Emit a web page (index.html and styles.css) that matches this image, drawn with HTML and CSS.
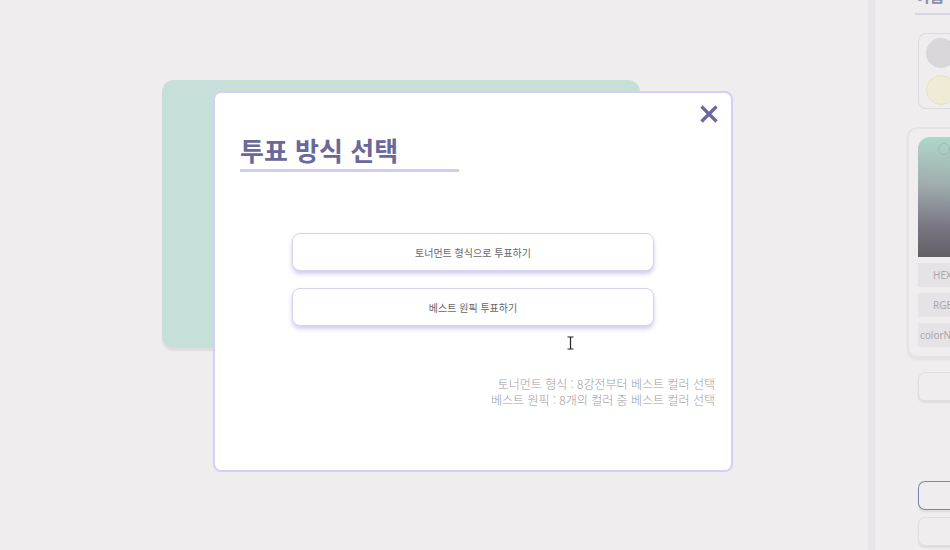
FILE: index.html
```html
<!DOCTYPE html>
<html lang="ko">
<head>
<meta charset="utf-8">
<link rel="stylesheet" href="styles.css">
</head>
<body>
<div class="main">
  <div class="back-card"></div>
  <div class="modal">
    <button class="close" aria-label="닫기">
      <svg width="20" height="20" viewBox="0 0 20 20"><path d="M2.5 2.5 L17.5 17.5 M17.5 2.5 L2.5 17.5" stroke="#6a6899" stroke-width="3.2" stroke-linecap="butt" fill="none"/></svg>
    </button>
    <h2 class="title">투표 방식 선택</h2>
    <div class="title-line"></div>
    <div class="options">
      <button class="option">토너먼트 형식으로 투표하기</button>
      <button class="option">베스트 원픽 투표하기</button>
    </div>
    <div class="info">
      <p>토너먼트 형식 : 8강전부터 베스트 컬러 선택</p>
      <p>베스트 원픽 : 8개의 컬러 중 베스트 컬러 선택</p>
    </div>
    <svg class="cursor" width="7" height="14" viewBox="0 0 7 14"><path d="M0.5 1 H6.5 M3.5 1 V13 M0.5 13 H6.5" stroke="#222" stroke-width="1.2" fill="none"/></svg>
  </div>
</div>
<aside class="side">
  <div class="stripe"></div>
  <div class="panel">
    <div class="panel-head">이름</div>
    <div class="swatches">
      <span class="dot gray"></span>
      <span class="dot cream"></span>
    </div>
    <div class="picker">
      <div class="gradient"><span class="ring"></span></div>
      <div class="field">HEX</div>
      <div class="field">RGBA</div>
      <div class="field small">colorName</div>
    </div>
    <div class="pbtn"></div>
    <div class="spacer"></div>
    <div class="pbtn active"></div>
    <div class="pbtn"></div>
  </div>
</aside>
</body>
</html>
```
FILE: styles.css
```css
* { box-sizing: border-box; }
html, body { margin: 0; padding: 0; }
body {
  width: 950px;
  height: 550px;
  overflow: hidden;
  background: #efedee;
  display: flex;
  font-family: "Noto Sans CJK KR", "Noto Sans", sans-serif;
}
.main {
  position: relative;
  width: 868px;
  flex: none;
}
.back-card {
  margin: 80px 0 0 162px;
  width: 478px;
  height: 268px;
  background: #c6e0d9;
  border-radius: 12px;
  box-shadow: 0 3px 2px rgba(0, 0, 0, 0.07);
}
.modal {
  position: absolute;
  left: 213px;
  top: 91px;
  width: 520px;
  height: 381px;
  background: #fff;
  border: 2px solid #d3d0f3;
  border-radius: 8px;
  padding: 0 16px 0 25px;
}
.close {
  position: absolute;
  right: 12px;
  top: 11px;
  padding: 0;
  border: 0;
  background: none;
  width: 20px;
  height: 20px;
}
.close svg { display: block; }
.title {
  margin: 38px 0 0 0;
  font-size: 26px;
  font-weight: 700;
  line-height: 38px;
  color: #6a6899;
  letter-spacing: 0;
}
.title-line {
  width: 219px;
  height: 3px;
  background: #d0cdf3;
  margin-top: 0;
}
.options {
  display: flex;
  flex-direction: column;
  align-items: center;
  gap: 17px;
  margin-top: 61px;
  margin-left: -25px;
  margin-right: -16px;
}
.option {
  width: 362px;
  height: 38px;
  background: #fff;
  border: 1.5px solid #d6d3ef;
  border-radius: 8px;
  box-shadow: 0 3px 4px rgba(170, 165, 225, 0.55);
  font-family: "Noto Sans CJK KR", "Noto Sans", sans-serif;
  font-size: 10px;
  font-weight: 400;
  color: #66666d;
  padding: 0;
}
.info {
  margin-top: 50px;
  text-align: right;
  font-size: 12px;
  line-height: 16px;
  font-weight: 300;
  color: #9d9ca2;
}
.info p { margin: 0; }
.cursor {
  position: absolute;
  left: 352px;
  top: 243px;
}
.side {
  flex: 1;
  display: flex;
}
.stripe {
  width: 7px;
  background: #e8e6e8;
}
.panel {
  flex: 1;
  padding-left: 40px;
  display: flex;
  flex-direction: column;
}
.panel-head {
  margin-top: -16px;
  height: 31px;
  font-size: 16px;
  font-weight: 700;
  line-height: 22px;
  color: #8f8ea8;
  border-bottom: 2px solid #d7d6e3;
  white-space: nowrap;
  overflow: hidden;
}
.swatches {
  margin: 18px 0 0 3px;
  height: 76px;
  border: 1px solid #dddbe2;
  border-right: 0;
  border-radius: 8px 0 0 8px;
  padding: 4px 0 0 7px;
  display: flex;
  flex-direction: column;
  gap: 7px;
}
.dot {
  width: 30px;
  height: 30px;
  border-radius: 50%;
  display: block;
}
.dot.gray { background: #d8d6d9; }
.dot.cream { background: #efebd5; border: 1px solid #e6e2c8; }
.picker {
  margin: 18px 0 0 -8px;
  height: 231px;
  border: 2px solid #e5e3e6;
  border-right: 0;
  border-radius: 10px 0 0 10px;
  padding: 8px 0 0 9px;
  background: #efedee;
  box-shadow: 0 2px 3px rgba(0,0,0,0.05);
}
.gradient {
  position: relative;
  height: 120px;
  background:
    linear-gradient(180deg, rgba(175, 220, 205, 0.85) 0%, rgba(150, 165, 165, 0.6) 40%, rgba(115, 110, 125, 0.9) 75%, rgba(100, 95, 100, 1) 100%),
    linear-gradient(90deg, #b4b2ba, #a4c4bc);
  border-top-left-radius: 12px;
}
.ring {
  position: absolute;
  left: 20px;
  top: 6px;
  width: 12px;
  height: 12px;
  border: 1px solid #a3b8b2;
  border-radius: 50%;
}
.field {
  margin-top: 6px;
  height: 24px;
  background: #e5e3e5;
  font-size: 10px;
  line-height: 24px;
  color: #a8a7ab;
  padding-left: 15px;
  white-space: nowrap;
  overflow: hidden;
  font-family: "Noto Sans", sans-serif;
}
.field.small { padding-left: 2px; }
.pbtn {
  margin: 14px 0 0 3px;
  height: 29px;
  background: #efedee;
  border: 1.5px solid #e0dee3;
  border-right: 0;
  border-radius: 7px 0 0 7px;
  box-shadow: 0 2px 2px rgba(0,0,0,0.07);
}
.spacer { height: 66px; }
.pbtn.active { border-color: #7d84b3; margin-top: 14px; }
.pbtn.active + .pbtn { margin-top: 7px; }
```
